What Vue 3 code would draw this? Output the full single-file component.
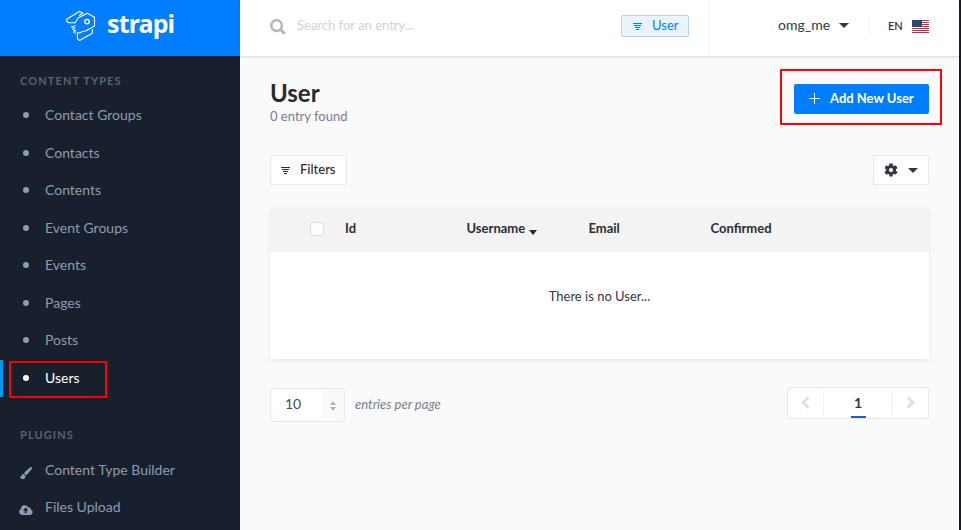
<script setup>
const contentTypes = ['Contact Groups', 'Contacts', 'Contents', 'Event Groups', 'Events', 'Pages', 'Posts', 'Users']
const active = 'Users'
const entries = 10
</script>

<template>
  <div class="app">
    <aside class="sidebar">
      <div class="brand">
        <svg class="brand-mark" width="30" height="32" viewBox="0 0 30 32" fill="none" stroke="#fff" stroke-width="1.1" stroke-linejoin="round" stroke-linecap="round">
          <path d="M9 12.700 L12.300 7.800 L21.300 3.200 L28.500 7.200 V16 L19.800 21 L17 21.200 L13.500 23 L11.400 22.500 V28.500 L13.500 30.500 L26.300 23.300 V19.500" />
          <path d="M9 12.700 H2.800 L.8 11.500 V9.200 L13.200 1.500 L17 3 L13.500 5.300" />
          <path stroke-width=".9" d="M5.600 16.800 L9.400 15.800 M5.600 16.800 L9.200 18.300 L6.200 19.500 L9.800 20.800 L7.200 22.300 L9.500 23.300" />
          <circle cx="21" cy="11.600" r="2.200" stroke-width="1.400" />
        </svg>
        <span class="brand-name">strapi</span>
      </div>
      <nav class="menu">
        <h2 class="menu-title">Content types</h2>
        <ul class="menu-list">
          <li v-for="item in contentTypes" :key="item" class="menu-item" :class="{ active: item === active }">
            <span class="menu-icon"><i class="dot"></i></span>
            <span>{{ item }}</span>
            <i v-if="item === active" class="mark mark-menu"></i>
          </li>
        </ul>
        <h2 class="menu-title plugins">Plugins</h2>
        <ul class="menu-list">
          <li class="menu-item">
            <span class="menu-icon">
              <svg class="brush" width="12" height="12" viewBox="0 0 12 12" fill="currentColor">
                <path d="M11.700.3c-.5-.5-1.100-.3-1.700.1L5.200 4.800 4 6.500 5.800 8.200 7.500 7 11.800 2C12.100 1.400 12.200.8 11.700.3zM3.700 7C2.600 6.800 1.700 7.500 1.600 8.600 1.500 9.600.8 9.600 0 9.400c.2 1.600 1.300 2.600 2.900 2.600 1.700 0 2.700-1.200 2.500-3z" />
              </svg>
            </span>
            <span>Content Type Builder</span>
          </li>
          <li class="menu-item">
            <span class="menu-icon">
              <svg class="cloud" width="14" height="10" viewBox="0 0 14 10">
                <path fill="currentColor" d="M3.200 10A3.100 3.100 0 0 1 1.900 4.100 3.800 3.800 0 0 1 9.100 2.300 2 2 0 0 1 11.800 4.600 2.800 2.800 0 0 1 11.200 10z" />
                <path fill="#18202e" d="M6.600 2.600 3.900 5.500h1.800V8.300h1.900V5.500h1.800z" />
              </svg>
            </span>
            <span>Files Upload</span>
          </li>
        </ul>
      </nav>
    </aside>

    <div class="page">
      <header class="topbar">
        <div class="search">
          <svg width="16" height="16" viewBox="0 0 16 16" fill="none" stroke="#b3b5b9">
            <circle cx="6.600" cy="6.600" r="5.300" stroke-width="2.500" />
            <path d="M10.500 10.500 14.700 14.700" stroke-width="3" />
          </svg>
          <span>Search for an entry...</span>
        </div>
        <div class="chip">
          <svg width="9" height="7" viewBox="0 0 9 7" fill="currentColor">
            <path d="M0 0h9v1H0zM1 2h7v1H1zM2 4h5v1H2zM3 6h3v1H3z" />
          </svg>
          <span>User</span>
        </div>
        <div class="account">
          <span class="account-name">omg_me</span>
          <i class="caret"></i>
        </div>
        <div class="locale">
          <span>EN</span>
          <svg width="17" height="13" viewBox="0 0 17 13">
            <path fill="#fff" d="M0 0h17v13H0z" />
            <path fill="#bf2f43" d="M0 0h17v1H0zM0 2h17v1H0zM0 4h17v1H0zM0 6h17v1H0zM0 8h17v1H0zM0 10h17v1H0zM0 12h17v1H0z" />
            <path fill="#24406f" d="M0 0h10v7H0z" />
            <path fill="none" stroke="#8796b3" stroke-width=".6" stroke-dasharray=".7 1.300" d="M.6 1.300h9M1.500 3.300h8M.6 5.300h9" />
          </svg>
        </div>
      </header>

      <main class="content">
        <div class="heading">
          <div>
            <h1>User</h1>
            <p>0 entry found</p>
          </div>
          <button class="add">
            <svg width="11" height="11" viewBox="0 0 11 11" stroke="#fff" stroke-width="1"><path d="M5.500 0v11M0 5.500h11" /></svg>
            <span>Add New User</span>
            <i class="mark mark-add"></i>
          </button>
        </div>

        <div class="tools">
          <button class="tool filters">
            <svg width="9" height="7" viewBox="0 0 9 7" fill="currentColor">
              <path d="M0 0h9v1H0zM1 2h7v1H1zM2 4h5v1H2zM3 6h3v1H3z" />
            </svg>
            <span>Filters</span>
          </button>
          <button class="tool settings">
            <svg width="14" height="14" viewBox="0 0 14 14">
              <circle cx="7" cy="7" r="3.600" fill="none" stroke="#323740" stroke-width="3" />
              <path stroke="#323740" stroke-width="3.400" d="M7 .4v2.200M7 11.400v2.200M1.300 3.700l1.900 1.100M10.800 9.200l1.900 1.100M1.300 10.300l1.900-1.100M10.800 4.800l1.900-1.100" />
            </svg>
            <i class="caret"></i>
          </button>
        </div>

        <section class="table">
          <div class="thead">
            <i class="checkbox"></i>
            <span>Id</span>
            <span>Username <i class="sort"></i></span>
            <span>Email</span>
            <span>Confirmed</span>
          </div>
          <div class="empty">There is no User...</div>
        </section>

        <footer class="footer">
          <div class="select">
            <span class="select-value">{{ entries }}</span>
            <span class="select-arrows">
              <svg width="6" height="10" viewBox="0 0 6 10" fill="#aeb0b5"><path d="M0 4 3 .3 6 4zM0 6h6L3 9.700z" /></svg>
            </span>
          </div>
          <span class="per-page">entries per page</span>
          <div class="pager">
            <span class="arrow">
              <svg width="9" height="13" viewBox="0 0 9 13" fill="none" stroke="#dfe0e3" stroke-width="3"><path d="M7.500 1.200 2.200 6.500l5.300 5.300" /></svg>
            </span>
            <span class="current"><b>1</b></span>
            <span class="arrow">
              <svg width="9" height="13" viewBox="0 0 9 13" fill="none" stroke="#dfe0e3" stroke-width="3"><path d="M1.500 1.200l5.300 5.300-5.300 5.300" /></svg>
            </span>
          </div>
        </footer>
      </main>
    </div>
  </div>
</template>

<style>
body { background: #fafafb; }
</style>

<style scoped>
* { box-sizing: border-box; }
h1, h2, p, ul { margin: 0; padding: 0; }
ul { list-style: none; }
svg { display: block; flex: none; }
button { font: inherit; position: relative; cursor: pointer; }

.app {
  display: flex;
  width: 961px;
  height: 530px;
  overflow: hidden;
  font-family: Lato, "Liberation Sans", sans-serif;
  font-size: 13px;
  color: #333740;
}

.sidebar { width: 240px; flex: none; background: #18202e; }
.brand { display: flex; height: 56px; padding: 10px 0 0 66px; background: #007eff; }
.brand-name {
  margin-left: 11px;
  font-family: "Noto Sans", sans-serif;
  font-size: 25px;
  line-height: 27px;
  font-weight: 700;
  letter-spacing: -.85px;
  color: #fff;
}
.menu-title {
  height: 41px;
  padding: 17px 20px 0;
  font-size: 11px;
  line-height: 16px;
  letter-spacing: 1.1px;
  text-transform: uppercase;
  color: #5b6270;
}
.menu-title.plugins { height: 54.6px; padding-top: 30px; }
.menu-item {
  position: relative;
  display: flex;
  align-items: center;
  height: 37.5px;
  padding: 0 0 2px 17px;
  border-left: 3px solid transparent;
  font-size: 14px;
  color: #919bae;
}
.menu-item.active { border-color: #0097f6; color: #fff; }
.menu-icon { width: 25px; flex: none; }
.dot { display: block; width: 6px; height: 6px; margin: 1px 0 0 3px; border-radius: 50%; background: currentColor; }
.brush { margin-top: 7px; }
.cloud { margin: 7px 0 0 -1px; }
.plugins + .menu-list .menu-item { height: 37.2px; }

.mark { position: absolute; border: 2px solid #f00; border-radius: 1px; }
.mark-menu { left: 6px; top: 1px; width: 98px; height: 37px; }
.mark-add { left: -14px; top: -15px; width: 162px; height: 56px; }

.page { flex: 1; min-width: 0; border-right: 2px solid #1b1c20; background: #fafafb; }
.topbar { display: flex; align-items: center; height: 56px; background: #fff; box-shadow: 0 1px 2px rgba(40, 42, 49, .16); }
.search { display: flex; align-items: center; flex: 1; gap: 11px; padding-left: 30px; color: #ced3dc; }
.search span { margin-top: -6px; }
.search svg { margin-top: -2px; }
.chip {
  display: flex;
  align-items: center;
  gap: 10px;
  width: 68px;
  height: 22px;
  margin: -4px 20px 0 0;
  padding: 0 0 2px 11px;
  border: 1px solid #aed4fb;
  border-radius: 2px;
  background: #e9f4ff;
  color: #007eff;
}
.chip svg { margin-top: 3px; }
.account { display: flex; align-items: center; height: 56px; width: 160px; padding: 0 0 7px 68px; border-left: 1px solid #f3f3f4; font-size: 14px; }
.caret { width: 0; height: 0; border: 5px solid transparent; border-top: 5px solid currentColor; border-bottom: 0; }
.account .caret { margin: 2px 0 0 9px; }
.locale { display: flex; align-items: center; gap: 9px; width: 90px; height: 20px; margin-top: -4px; padding-left: 18px; border-left: 1px solid #f3f3f4; font-size: 11px; font-weight: 600; }
.locale span { margin-top: -2px; }

.content { padding: 23px 30px 0; }
.heading { display: flex; justify-content: space-between; height: 76px; }
h1 { font-size: 24px; line-height: 28px; font-weight: 700; color: #272b2d; }
p { line-height: 18px; color: #787e8f; }
.add {
  display: flex;
  align-items: center;
  gap: 10px;
  width: 135px;
  height: 30px;
  margin-top: 5px;
  padding: 0 0 2px 15px;
  border: 0;
  border-radius: 2px;
  background: #007eff;
  color: #fff;
  font-weight: 700;
}
.tools { display: flex; justify-content: space-between; height: 53px; }
.tool { display: flex; align-items: center; height: 30px; border: 1px solid #e3e9f3; border-radius: 2px; background: #fff; color: #292d33; }
.filters { width: 77px; gap: 10px; padding: 0 0 2px 10px; font-weight: 500; }
.filters svg { margin-top: 3px; }
.settings { width: 56px; gap: 10px; padding: 0 0 0 10px; color: #323740; }

.table { background: #fff; box-shadow: 0 2px 4px #e3e9f3; }
.thead {
  display: grid;
  grid-template-columns: 35px 121.500px 122px 122px 1fr;
  align-items: center;
  height: 44px;
  padding: 0 0 4px 40px;
  background: #f3f3f3;
  font-weight: 700;
  color: #292d33;
}
.checkbox { width: 14px; height: 14px; margin-top: 2px; border: 1px solid #dcdcde; border-radius: 3px; background: #fdfdfd; }
.sort { display: inline-block; margin-left: 1px; border: 4.500px solid transparent; border-width: 5px 4px 0; border-top-color: currentColor; vertical-align: -2px; }
.empty { height: 107px; padding-top: 36px; line-height: 17px; text-align: center; }

.footer { display: flex; height: 34px; margin-top: 29px; }
.select { display: flex; width: 75px; height: 34px; border: 1px solid #e3e9f3; border-radius: 3px; background: #fff; font-size: 14px; color: #464b54; }
.select-value { width: 51px; padding-left: 14px; line-height: 30px; }
.select-arrows { display: flex; align-items: center; justify-content: center; flex: 1; padding-top: 2px; background: #fafafb; }
.per-page { flex: 1; padding-left: 10px; line-height: 32px; font-style: italic; color: #787e8f; }
.pager { display: flex; align-items: center; width: 142px; height: 32px; margin-top: -1px; border: 1px solid #e3e9f3; border-radius: 3px; background: #fff; }
.arrow { display: flex; justify-content: center; width: 35px; padding-bottom: 2px; }
.current { display: flex; justify-content: center; flex: 1; position: relative; height: 24px; border: 1px solid #f0f1f3; border-width: 0 1px; line-height: 24px; font-size: 14px; }
.current b { width: 15px; height: 27px; border-bottom: 2px solid #1c5de7; text-align: center; }
</style>
